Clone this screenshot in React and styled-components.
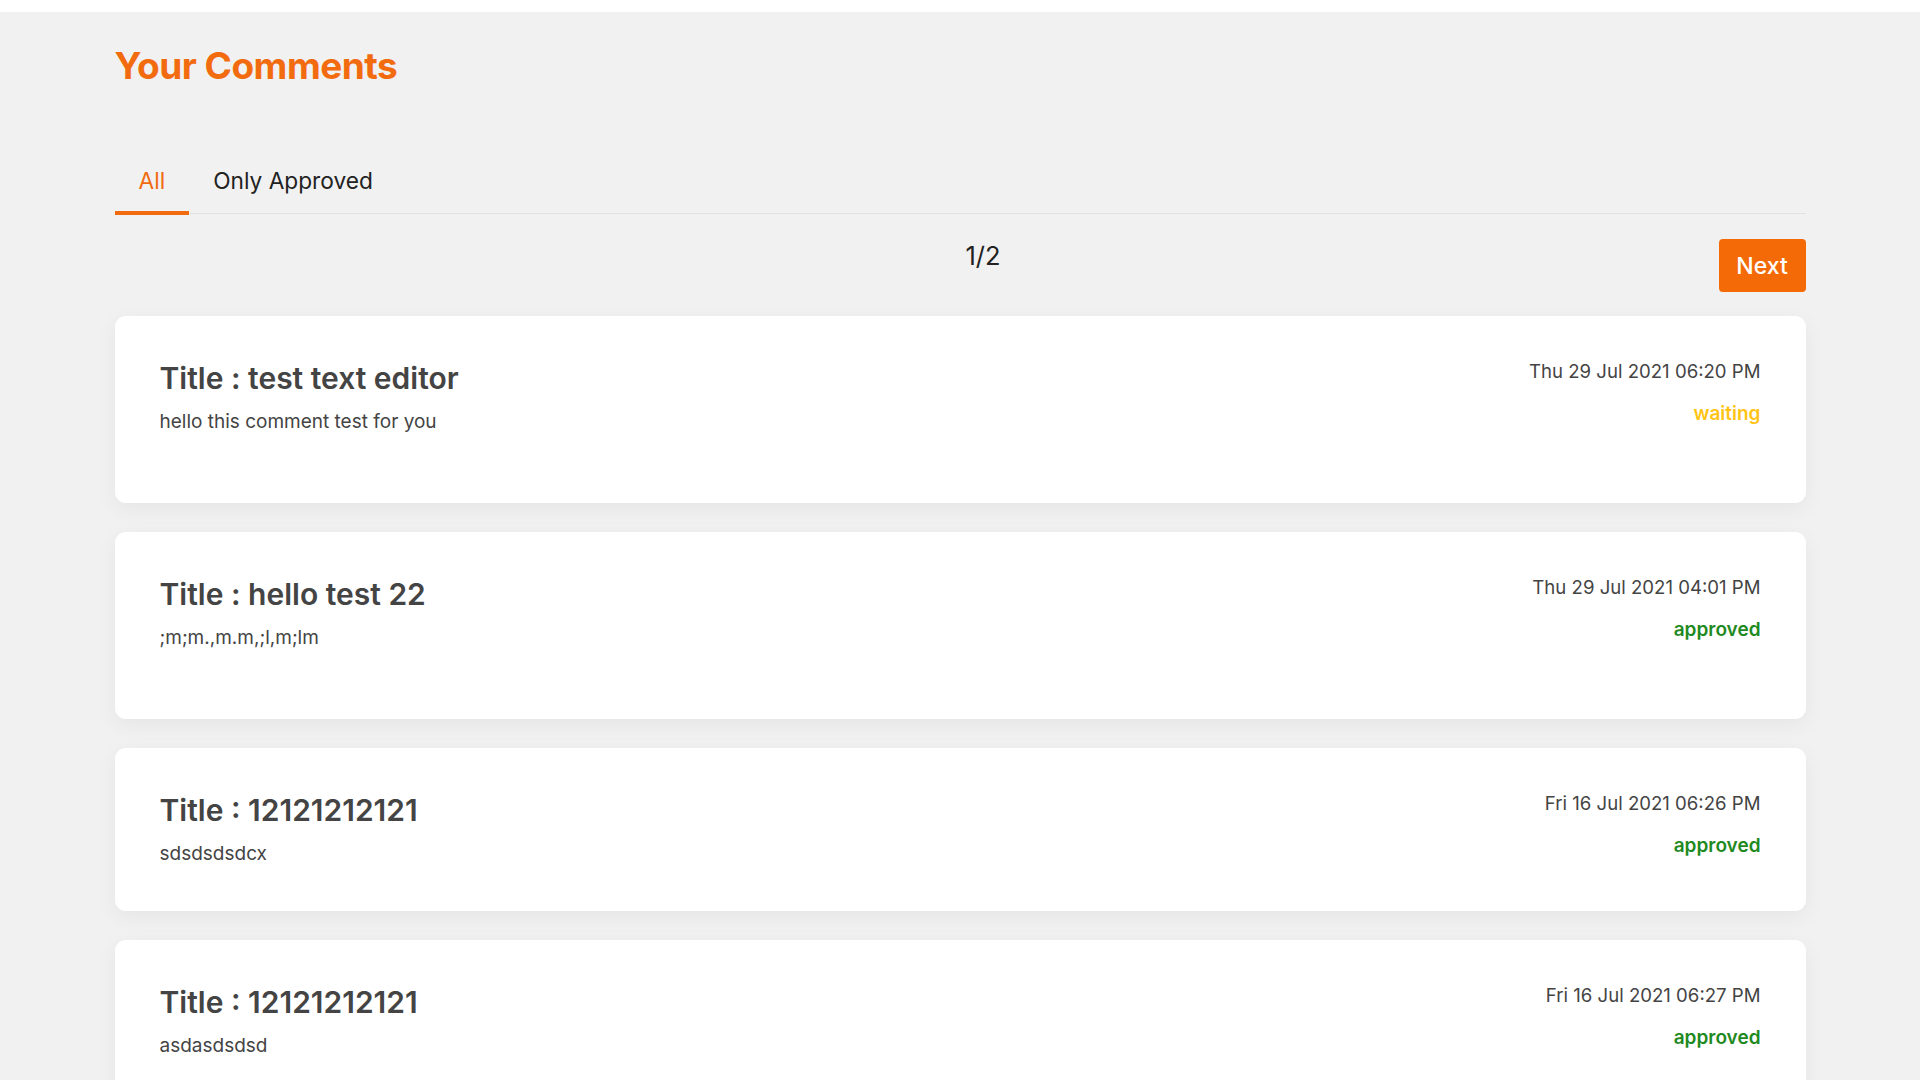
import React, { useState } from 'react'
import styled, { createGlobalStyle } from 'styled-components'

const GlobalStyle = createGlobalStyle`
  body {
    margin: 0;
    background: #f1f1f1;
    font-family: Inter, "Noto Sans", sans-serif;
    color: #222;
  }
`

const TopStrip = styled.div`
  height: 12px;
  background: #fff;
`

const Container = styled.main`
  width: 1691px;
  margin: 0 auto;
  padding-top: 32px;
`

const Heading = styled.h1`
  margin: 0;
  font-size: 37px;
  line-height: 44px;
  font-weight: 700;
  color: #f26b0f;
  letter-spacing: -0.5px;
`

const TabBar = styled.div`
  display: flex;
  margin-top: 79px;
  border-bottom: 1px solid #e2e2e2;
`

const Tab = styled.button`
  border: none;
  background: none;
  padding: 0 24px 16px;
  margin-bottom: -2px;
  font-family: inherit;
  font-size: 22.7px;
  line-height: 28px;
  color: ${(p) => (p.active ? '#f26b0f' : '#222')};
  border-bottom: 4px solid ${(p) => (p.active ? '#f26b0f' : 'transparent')};
  cursor: pointer;
`

const Pager = styled.div`
  display: flex;
  align-items: flex-start;
  margin-top: 25px;
`

const Counter = styled.span`
  margin-left: auto;
  margin-top: 4px;
  font-size: 25.5px;
  line-height: 26px;
  color: #222;
`

const NextButton = styled.button`
  margin-left: 718px;
  width: 87px;
  height: 53px;
  border: none;
  border-radius: 4px;
  background: #f46a06;
  color: #fff;
  font-family: inherit;
  font-size: 23px;
  font-weight: 500;
  cursor: pointer;
`

const List = styled.div`
  display: flex;
  flex-direction: column;
  gap: 29px;
  margin-top: 24px;
  padding-bottom: 40px;
`

const Card = styled.article`
  display: flex;
  justify-content: space-between;
  align-items: flex-start;
  background: #fff;
  border-radius: 11px;
  padding: 44px 45px 45px;
  box-shadow: 0 6px 22px rgba(0, 0, 0, 0.05);
`

const Title = styled.h3`
  margin: 0;
  font-size: 30px;
  line-height: 36px;
  font-weight: 600;
  color: #444;
`

const Body = styled.div`
  margin-top: 14px;
  font-size: 19px;
  line-height: 24px;
  color: #444;

  p {
    margin: 0;
    min-height: 24px;
  }
`

const Meta = styled.div`
  display: flex;
  flex-direction: column;
  align-items: flex-end;
  margin-top: -1px;
`

const Date = styled.span`
  font-size: 18.6px;
  line-height: 24px;
  color: #444;
`

const Status = styled.span`
  margin-top: 19px;
  font-size: 19px;
  line-height: 24px;
  font-weight: 600;
  color: ${(p) => (p.status === 'approved' ? '#1f8a1f' : '#ffc414')};
`

const comments = [
  { title: 'test text editor', body: ['hello this comment test for you', ''], date: 'Thu 29 Jul 2021 06:20 PM', status: 'waiting' },
  { title: 'hello test 22', body: [';m;m.,m.m,;l,m;lm', ''], date: 'Thu 29 Jul 2021 04:01 PM', status: 'approved' },
  { title: '12121212121', body: ['sdsdsdsdcx'], date: 'Fri 16 Jul 2021 06:26 PM', status: 'approved' },
  { title: '12121212121', body: ['asdasdsdsd'], date: 'Fri 16 Jul 2021 06:27 PM', status: 'approved' }
]

export default function App() {
  const [tab, setTab] = useState('all')

  return (
    <>
      <GlobalStyle />
      <TopStrip />
      <Container>
        <Heading>Your Comments</Heading>
        <TabBar>
          <Tab active={tab === 'all'} onClick={() => setTab('all')}>All</Tab>
          <Tab active={tab === 'approved'} onClick={() => setTab('approved')}>Only Approved</Tab>
        </TabBar>
        <Pager>
          <Counter>1/2</Counter>
          <NextButton>Next</NextButton>
        </Pager>
        <List>
          {comments.map((c, i) => (
            <Card key={i}>
              <div>
                <Title>Title : {c.title}</Title>
                <Body>
                  {c.body.map((line, j) => <p key={j}>{line}</p>)}
                </Body>
              </div>
              <Meta>
                <Date>{c.date}</Date>
                <Status status={c.status}>{c.status}</Status>
              </Meta>
            </Card>
          ))}
        </List>
      </Container>
    </>
  )
}
